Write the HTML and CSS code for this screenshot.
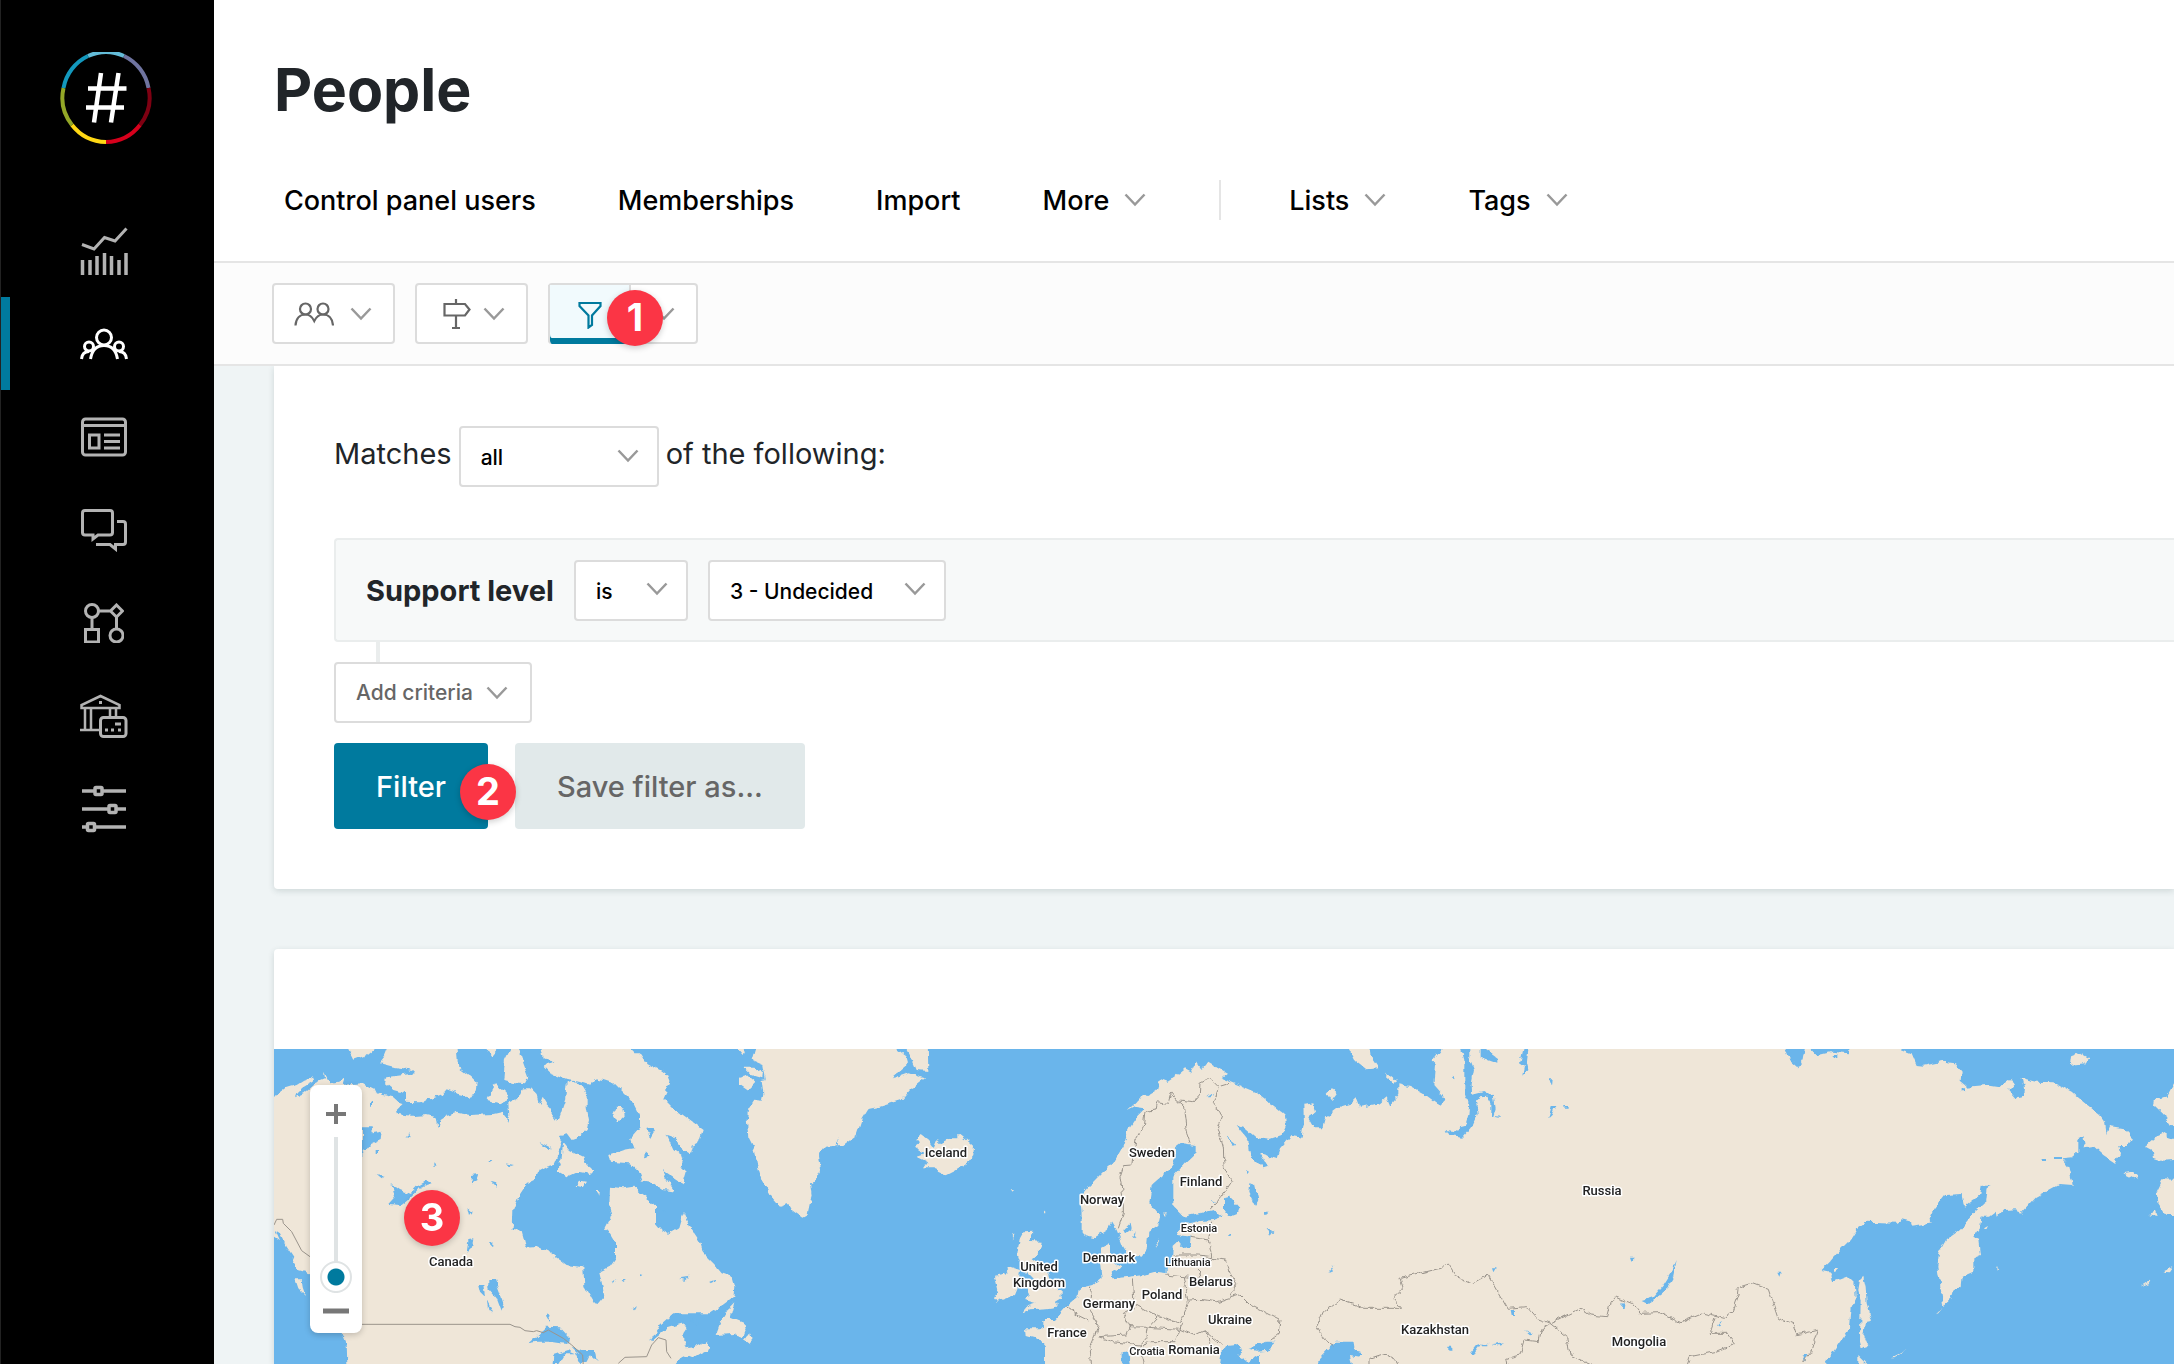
FILE: index.html
```html
<!DOCTYPE html>
<html lang="en">
<head>
<meta charset="utf-8">
<title>People</title>
<meta name="viewport" content="width=device-width, initial-scale=1">
<link rel="stylesheet" href="styles.css">
</head>
<body>
<svg width="0" height="0" class="sprite" aria-hidden="true">
  <symbol id="chevron" viewBox="0 0 22 14"><path d="M1.500 1.500 11 11.500 20.500 1.500" fill="none" stroke="#999" stroke-width="2.500"/></symbol>
</svg>
<div class="app">
  <aside class="sidebar">
    <a class="logo" href="#" aria-label="Home">
      <svg width="92" height="92" viewBox="0 0 92 92" fill="none" stroke-width="4">
        <path d="M28 4A44 44 0 0 1 64 4" stroke="#63bcd8"/>
        <path d="M64 4A44 44 0 0 1 88.500 36" stroke="#6f74a0"/>
        <path d="M88.500 36A44 44 0 0 1 80 73" stroke="#7e0012"/>
        <path d="M80 73A44 44 0 0 1 46 90" stroke="#d6001c"/>
        <path d="M46 90A44 44 0 0 1 12 73" stroke="#ffd814"/>
        <path d="M12 73A44 44 0 0 1 3.500 36" stroke="#93a727"/>
        <path d="M3.500 36A44 44 0 0 1 28 4" stroke="#1398bd"/>
        <path d="M41 21 34 70.500M58.500 21 51 70.500M28 36.500H66.500M26 55.500H64" stroke="#fff" stroke-width="4.500"/>
      </svg>
    </a>
    <nav class="side-nav" aria-label="Main">
      <a href="#" aria-label="Dashboard"><svg width="48" height="48" viewBox="0 0 48 48" fill="none" stroke="currentColor" stroke-width="3"><path d="M2 17.500 14 22 24.500 10.500 35 14 46.500 1.500"/><path d="M2.500 48V33M10 48V33M17 48V29M24.500 48V26M31.500 48V29M39 48V33M46 48V26" stroke-width="3.500"/></svg></a>
      <a href="#" class="active" aria-label="People"><svg width="48" height="32" viewBox="0 0 48 32" fill="none" stroke="currentColor" stroke-width="3"><circle cx="24" cy="9.500" r="7.500"/><circle cx="9" cy="18.500" r="4.500"/><circle cx="39" cy="18.500" r="4.500"/><path d="M10.500 31C12 22 17 17.500 24 17.500S36 22 37.500 31M1.500 31C2 26 5 23.500 9 23.500M46.500 31C46 26 43 23.500 39 23.500"/></svg></a>
      <a href="#" aria-label="Website"><svg width="46" height="40" viewBox="0 0 46 40" fill="none" stroke="currentColor" stroke-width="3"><rect x="1.500" y="2" width="43" height="36" rx="3"/><path d="M2 8.500H44M23 18H39M23 24.500H39M23 31H39"/><rect x="8.500" y="18" width="9.500" height="13"/></svg></a>
      <a href="#" aria-label="Communication"><svg width="46" height="44" viewBox="0 0 46 44" fill="none" stroke="currentColor" stroke-width="3"><path d="M4 2.500H29Q31.500 2.500 31.500 5V24.500Q31.500 27 29 27H17L12 31V27H4Q1.500 27 1.500 24.500V5Q1.500 2.500 4 2.500Z"/><path d="M36 13.500H42Q44.500 13.500 44.500 16V34Q44.500 36.500 42 36.500H34.500V41L29 36.500H15"/></svg></a>
      <a href="#" aria-label="Paths"><svg width="40" height="40" viewBox="0 0 40 40" fill="none" stroke="currentColor" stroke-width="3"><circle cx="8" cy="8" r="6.500"/><circle cx="32.500" cy="32.500" r="6.500"/><rect x="1.500" y="26.500" width="13" height="12.500"/><path d="M32.500 2 38.500 8 32.500 14 26.500 8ZM14.500 8H26.500M32.500 14V26M8 14.500V26.500" /></svg></a>
      <a href="#" aria-label="Finances"><svg width="48" height="44" viewBox="0 0 48 44" fill="none" stroke="currentColor" stroke-width="2.500"><path d="M1.500 14V11L20.500 2 39.500 11V14ZM5 14V36M11 14V36M30 14V23M36 14V23M0 36H20"/><rect x="20.500" y="23.500" width="25.500" height="19" rx="3" stroke-width="3"/><path d="M35 30H41M25 36H28M31 36H34M38 36H41M19 8.500H22" stroke-width="3"/></svg></a>
      <a href="#" aria-label="Settings"><svg width="44" height="48" viewBox="0 0 44 48" fill="none" stroke="currentColor" stroke-width="3.500"><path d="M0 6H12M21 6H44M0 24H26M35 24H44M0 42H5M14 42H44"/><rect x="13" y="2.500" width="7" height="7" rx="1"/><rect x="27" y="20.500" width="7" height="7" rx="1"/><rect x="5.500" y="38.500" width="7" height="7" rx="1"/></svg></a>
    </nav>
  </aside>

  <div class="page">
    <header class="header">
      <h1>People</h1>
      <nav class="tabs" aria-label="People sections">
        <a href="#">Control panel users</a>
        <a href="#">Memberships</a>
        <a href="#">Import</a>
        <button type="button">More <svg class="chev"><use href="#chevron"/></svg></button>
        <span class="divider"></span>
        <button type="button">Lists <svg class="chev"><use href="#chevron"/></svg></button>
        <button type="button">Tags <svg class="chev"><use href="#chevron"/></svg></button>
      </nav>
    </header>

    <div class="toolbar">
      <button type="button" class="tool" aria-label="People actions">
        <svg width="40" height="24" viewBox="0 0 40 24" fill="none" stroke="#666" stroke-width="2.200"><circle cx="11.500" cy="7" r="5.500"/><circle cx="29" cy="7" r="5.500"/><path d="M1.500 23.500C2 16.500 6 12.500 11.500 12.500Q17 12.500 20.250 19Q23.500 12.500 29 12.500C34.500 12.500 38.500 16.500 39 23.500"/></svg>
        <svg class="chev"><use href="#chevron"/></svg>
      </button>
      <button type="button" class="tool signpost" aria-label="Paths">
        <svg width="28" height="30" viewBox="0 0 28 30" fill="none" stroke="#666" stroke-width="2.200"><path d="M1.500 5H22L26.500 10.500 22 16.500H1.500ZM13 0V5M13 16.500V29M9 29H17"/></svg>
        <svg class="chev"><use href="#chevron"/></svg>
      </button>
      <div class="split">
        <button type="button" class="filter-on" aria-label="Filter people"><svg width="24" height="28" viewBox="0 0 24 28" fill="none" stroke="#007a9e" stroke-width="2.200"><path d="M1.500 2H22.500V5L14 14.500V24L10.500 26.500V14.500L1.500 5Z"/></svg></button>
        <button type="button" class="filter-more" aria-label="Saved filters"><svg class="chev"><use href="#chevron"/></svg></button>
        <span class="badge badge-one">1</span>
      </div>
    </div>

    <main class="content">
      <form class="card filter-card">
        <div class="match">
          <label for="match">Matches</label>
          <span class="select select-match"><select id="match"><option>all</option><option>any</option></select><svg class="chev"><use href="#chevron"/></svg></span>
          <span>of the following:</span>
        </div>
        <div class="criteria">
          <strong>Support level</strong>
          <span class="select select-op"><select aria-label="Operator"><option>is</option></select><svg class="chev"><use href="#chevron"/></svg></span>
          <span class="select select-value"><select aria-label="Support level"><option>3 - Undecided</option></select><svg class="chev"><use href="#chevron"/></svg></span>
        </div>
        <div class="connector"></div>
        <button type="button" class="add">Add criteria <svg class="chev"><use href="#chevron"/></svg></button>
        <div class="actions">
          <span class="marked"><button type="button" class="primary">Filter</button><span class="badge badge-two">2</span></span>
          <button type="button" class="secondary">Save filter as...</button>
        </div>
      </form>

      <section class="card map-card" aria-label="Map">
        <div class="map">
          <svg class="world" viewBox="0 0 1900 315" preserveAspectRatio="xMinYMin slice" role="img" aria-label="World map">
            <defs><filter id="coast" x="0" y="0" width="100%" height="100%" filterUnits="userSpaceOnUse"><feTurbulence type="fractalNoise" baseFrequency="0.140" numOctaves="2" seed="4"/><feDisplacementMap in="SourceGraphic" scale="6" xChannelSelector="R" yChannelSelector="G"/></filter></defs>
            <g filter="url(#coast)">
              <!-- North America -->
              <g transform="translate(-4 -9) scale(.33333)">
                <path class="land" d="M-20 185 12 175 25 160 45 145 60 140 80 135 100 122 130 112 125 125 100 140 80 160 75 172 100 160 140 125 165 115 162 95 180 130 205 125 222 110 215 135 275 130 300 145 340 165 370 172 385 185 400 190 378 212 385 222 430 228 470 225 500 232 505 265 512 240 530 228 560 218 600 225 670 222 700 215 712 245 718 225 715 190 745 175 760 145 780 145 800 165 808 195 818 170 830 190 845 205 845 225 860 245 870 225 885 180 890 130 910 125 935 140 950 165 950 200 957 240 950 270 920 295 905 300 890 280 870 285 875 300 865 340 850 375 830 380 795 400 795 420 770 432 745 470 730 510 728 570 755 572 768 620 800 618 835 635 870 660 890 675 940 682 943 735 975 790 985 792 1003 770 998 740 988 695 1020 680 1038 655 1038 610 1020 580 1005 570 1025 530 1018 500 1020 440 1060 445 1090 440 1110 460 1140 480 1158 500 1158 550 1175 570 1195 582 1225 565 1232 540 1242 515 1260 560 1290 605 1300 640 1330 670 1355 700 1385 710 1393 740 1390 770 1350 800 1320 820 1210 820 1170 855 1140 905 1190 865 1240 850 1250 865 1240 880 1240 905 1250 925 1280 920 1310 905 1322 925 1290 940 1265 955 1240 945 1200 1000H232V972L230 910 215 875 160 850 120 700 85 690 60 655 40 610 -20 570Z"/>
                <path class="land" d="M365 0H560V27L565 85 600 110 620 130 615 165 600 170 560 160 530 148 515 165 490 175 450 187 405 185 405 160 370 150 345 130 350 112 400 105 435 100 430 90 400 85 370 80 330 70 345 50ZM230 20H320L290 45 250 60ZM645 20H690L665 50ZM700 120 705 60 725 20H745L760 70 775 110 765 130 720 125ZM650 175 675 130 710 160 715 180 690 190 655 180ZM810 0H1075L1090 40 1110 40 1130 70 1150 80 1170 90 1190 105 1200 130 1180 175 1215 210 1250 235 1298 270 1285 310 1265 320 1260 340 1235 325 1205 290 1190 285 1210 330 1240 350 1235 380 1250 395 1240 430 1220 420 1175 390 1185 410 1215 455 1180 450 1150 430 1120 425 1110 400 1080 370 1020 365 1015 345 1060 330 1090 325 1080 295 1110 260 1110 230 1090 190 1060 160 1030 130 1000 120 980 115 960 135 930 125 890 120 840 100 820 80 850 65 820 50ZM880 305 900 330 940 350 950 375 972 390 960 402 925 395 890 412 860 395 875 350ZM1030 222 1040 200 1060 202 1064 230 1045 248ZM917 440 930 422 948 425 935 445ZM980 450 990 450 988 470ZM1337 885 1350 850 1380 800 1393 787 1382 830 1420 845 1430 865 1420 892 1390 882ZM1425 900 1440 880 1445 900 1438 910ZM75 715 95 715 98 745 105 765 85 745Z"/>
                <path class="water" d="M276 262H305L308 280 335 275 332 300 300 315 276 345ZM365 432 390 450 420 462 440 440 470 422 485 430 450 440 425 470 395 495 355 492 375 470ZM605 405 628 402 620 425 605 430ZM665 425 682 430 680 440ZM655 720 675 720 690 760 700 790 695 815 680 775 655 745ZM625 735 640 735 645 770 630 755ZM650 780 670 820 655 810ZM595 600 610 598 605 625 590 640ZM595 505 608 515 600 525ZM828 830 835 820 842 830 835 842ZM775 910 830 860 870 862 900 895 895 912 870 910 840 905 800 905ZM848 972 850 945 895 930 930 945 905 920 935 930 975 930 980 965 960 945 950 965 930 972 915 940 885 940 865 972ZM705 370 732 375 715 380ZM655 360 668 360 660 366ZM320 402 342 408 335 415ZM408 288 418 280 422 292ZM808 305 845 325 835 330ZM1128 260 1155 270 1140 295ZM1125 335 1142 350 1122 355ZM1228 715 1258 710 1245 720ZM1318 725 1340 718 1325 732ZM1085 805 1098 795 1090 808ZM1025 725 1042 718 1030 730ZM1055 720 1068 720 1060 726ZM1108 702 1120 706 1112 712ZM945 740 966 748 950 750ZM15 570 30 580 50 620 70 650 65 662 35 615ZM1180 512 1187 512 1184 520ZM1250 830 1290 845 1280 852ZM490 370 500 380 490 380ZM300 185H306V200H300ZM320 330H327V345H320ZM664 606H670V620H664Z"/>
              </g>
              <!-- Greenland, Iceland and the British Isles -->
              <g transform="translate(446 -9) scale(.33333)">
                <path class="land" d="M112 0H530V27L555 45 563 75 515 115 530 112 565 100 615 115 570 150 545 180 480 200 445 208 425 240 410 285 370 315 350 316 355 290 345 318 315 320 297 345 303 390 285 425 270 430 275 465 262 525 247 533 215 510 205 492 180 500 150 465 125 420 110 370 105 330 85 290 80 240 85 205 100 182 125 185 130 160 125 120 137 118 130 75 95 60ZM545 0H623L625 93 590 90 575 55ZM60 110 80 105 108 130 85 152 60 135ZM70 80 100 80 132 100 130 115 95 105ZM45 20H75L65 45ZM605 285 625 300 632 315 640 325 650 300 660 310 690 295 715 295 715 280 740 300 762 320 760 345 745 365 705 390 680 403 640 385 612 385 625 365 590 348 615 340 585 320 600 310 592 300ZM910 577 940 575 930 603 962 605 955 640 935 655 965 675 985 700 990 735 1022 750 1022 775 1005 785 1015 800 980 805 930 808 905 823 925 798 950 790 915 780 930 765 925 745 945 720 925 700 905 680 892 640 900 595ZM870 680 900 690 895 740 885 765 830 785 822 775 835 750 825 710 850 705ZM872 448 882 448 878 455ZM970 520 975 508 976 520ZM878 592 886 580 884 596Z"/>
              </g>
              <!-- Europe and Asia -->
              <g transform="translate(726 -9) scale(.33333)">
                <path class="land" d="M245 575 245 520 240 470 265 440 305 400 340 370 368 320 385 270 415 225 435 205 405 200 380 213 410 185 430 160 445 165 470 150 480 118 500 125 530 105 555 85 575 95 590 65 605 90 625 65 650 80 683 100 665 115 715 135 770 158 825 200 855 225 858 255 845 285 810 297 765 290 735 265 710 255 745 300 750 345 790 385 805 380 780 340 830 355 840 325 875 285 905 290 912 250 910 195 940 190 948 215 925 235 940 262 968 262 975 235 1020 200 1055 190 1070 175 1080 200 1140 190 1160 172 1170 195 1195 165 1195 130 1230 138 1270 160 1325 200 1335 175 1300 135 1305 75 1298 65 1325 27V0H2700V27L2735 40 2750 75 2770 77 2830 65 2865 70 2885 95 2882 125 2900 140 2955 135 3000 142 3030 120 3045 130 3028 150 3050 175 3072 170 3075 145 3068 115 3110 125 3160 127 3215 155 3250 185 3300 225 3315 245 3320 285 3330 258 3370 265 3400 295 3380 318 3355 318 3360 345 3345 368 3310 345 3280 318 3255 322 3250 290 3235 295 3235 335 3215 352 3185 355 3205 380 3218 435 3180 432 3110 470 3060 525 3050 508 3010 510 2993 530 2990 515 2970 530 2945 530 2940 560 2920 590 2938 600 2943 645 2920 655 2920 695 2885 710 2882 738 2862 750 2855 775 2830 798 2822 745 2812 680 2818 635 2838 600 2880 570 2920 520 2955 490 2960 445 2972 437 2945 437 2940 465 2895 500 2888 462 2835 465 2800 510 2785 545 2800 550 2740 560 2735 545 2705 538 2690 548 2600 545 2575 560 2550 600 2520 630 2490 665 2465 690 2490 695 2500 725 2540 710 2565 735 2567 775 2555 800 2550 865 2520 905 2475 972V1000H135V920L115 895 80 885 78 865 130 865 130 840 165 840 200 800 235 770 240 745 280 735 305 715 300 670 300 625 330 610 330 650 355 680 335 695 340 715 375 712 430 705 465 695 500 700 500 685 515 680 518 620 535 605 550 625 572 620 575 590 530 585 545 555 600 543 640 540 668 530 640 510 600 520 550 530 520 500 520 410 555 370 587 340 587 315 545 310 525 325 525 360 500 395 455 435 448 490 480 530 475 555 445 575 440 630 425 650 385 645 370 620 350 570 335 545 320 570 285 592 255 585Z"/>
                <path class="land" d="M1035 0H1105L1112 50 1135 85 1100 88 1065 60ZM1160 98 1188 120 1180 132 1158 112ZM982 160 995 145 1010 160 995 180ZM2590 710 2597 740 2600 790 2616 845 2595 850 2590 880 2605 918 2585 925 2580 905 2582 780 2575 750 2580 720ZM2575 945 2602 972V1000H2575ZM3560 130 3522 130 3500 170 3465 177 3462 198 3490 225 3510 255 3560 257ZM3560 298 3522 298 3500 290 3500 277 3465 292 3435 318 3458 330 3462 355 3485 362 3560 358ZM3560 418 3490 415 3470 455 3475 490 3500 528 3560 528ZM3207 75 3210 50 3240 38 3268 55 3255 70ZM3370 400 3395 395 3415 412 3400 415ZM3445 523 3465 515 3470 528ZM2952 565 2964 558 2958 570ZM2808 823 2828 803 2815 820ZM3420 740 3455 718 3450 728ZM3487 695 3520 682 3510 697ZM2670 955 2720 930 2680 955ZM2990 680 2998 690 2994 690ZM468 610 478 598 472 620ZM492 518 500 516 498 524Z"/>
                <path class="water" d="M672 475 690 470 718 500 710 520 690 527 672 505ZM748 430 765 435 775 480 765 495 745 455ZM740 390 750 395 745 402ZM680 290 705 310 700 318ZM800 565 820 578 812 590ZM792 515H803V524H792ZM685 582H695V588H685ZM982 702 1006 675 996 695ZM370 570 392 548 395 565 375 580ZM400 590 410 570 405 595ZM622 172 640 158 632 172ZM630 480 644 484 640 490ZM2030 660 2020 710 2000 745 1965 775 1945 788 1928 780 1960 770 1990 735 2015 695ZM1382 20H1408V55L1422 90 1415 130 1416 162 1450 153 1482 172 1487 205 1480 228 1500 230 1498 234 1474 228 1474 190 1462 170 1440 172 1428 185 1433 220 1415 260 1390 290 1345 285 1337 270 1375 275 1380 262 1395 258 1405 225 1408 190 1393 165 1393 60ZM1442 20 1458 30 1492 55 1492 68 1442 50ZM1572 20H1583L1578 60 1585 90 1570 107 1575 80 1560 70ZM1648 115 1658 115 1656 138ZM1645 235 1655 198 1666 198 1655 225ZM1690 198H1703V203H1690ZM2355 20H2415L2408 60 2395 82 2370 60ZM2425 20H2545V40L2495 35 2450 46ZM2500 42H2512V55ZM1355 112 1366 108 1366 118ZM955 960 1005 905 1060 905 1065 935 1088 940 1080 950 1050 945 1055 972V1000H955ZM655 1000 665 940 680 915 705 912 730 930 715 945 745 965 780 945V1000ZM740 925 800 905 827 905 800 930 770 932ZM365 1000V940L385 935 392 1000ZM1410 940 1430 915 1445 910 1420 945ZM1445 911H1465V916H1445ZM1475 916 1508 910 1500 920ZM1572 870 1602 884 1590 886ZM1532 810 1545 810 1545 825 1535 825ZM1866 810 1868 788 1877 785 1874 810ZM1345 920H1357V932H1345ZM2150 860 2165 845 2162 858ZM1890 650 1908 650 1894 662ZM1476 685H1487L1480 697ZM2332 698 2342 698 2338 710ZM2408 945 2422 945 2415 962ZM3125 360H3138V366H3125ZM3165 348H3183V357H3165ZM2885 145H2893V154H2885Z"/>
                <path class="land" d="M345 672 362 680 352 693 338 688ZM2502 684H2510V692H2502ZM3492 498H3510V505H3492Z"/>
              </g>
              <g class="borders" transform="translate(726 -9) scale(.33333)"><path d="M355 565 370 520 370 480 360 410 370 380 395 378 405 300 430 260 435 215 465 210 470 185 505 190 515 155 535 180 580 185 598 165 600 130 630 115 655 140 690 130M515 165 550 195 560 280 570 308M655 145 640 190 668 230 655 265 670 320 672 380 695 425 665 470 630 508M635 545 625 600 575 592M625 600 635 650 595 645 520 645M635 655 680 660 690 700 710 730 692 770M595 690 600 715 550 710M400 715 405 790 475 830 540 850 565 790 550 710 495 705M565 780 600 778 650 785 720 765 750 795 840 840 835 880 810 900M275 740 265 810 295 855 285 885 270 920 275 980M370 820 410 800M370 820 390 860 445 862 475 830M295 890 380 885 390 860M445 862 440 890 420 915 340 905 295 890M445 862 540 868 545 850M540 868 580 885 610 870 665 915M540 868 525 905 440 905 420 930 430 970M610 870 640 920M200 798 235 825 265 840M1000 920 970 895 950 860 970 815 1020 780 1095 805 1205 805 1180 775 1210 745 1200 715 1320 685 1345 672 1370 710 1420 730 1465 705 1522 805 1580 800 1610 835 1650 850 1740 805 1770 825 1820 830 1830 790 1845 770 1895 790 1920 820 1980 818 2040 848 2110 820 2170 835 2200 810 2218 760 2205 745 2260 728 2305 745 2335 835 2380 855 2390 885 2455 870 2435 935 2410 965M1650 850 1700 890 1710 945 1785 980M1650 850 1620 870 1615 905 1572 900 1560 945 1520 955 1525 980M2145 835 2130 880 2180 880 2203 912 2145 935 2070 950 2060 980M1110 980V955L1155 940 1198 965V980"/></g>
            </g>
            <g class="borders" transform="translate(-4 -9) scale(.33333)"><path d="M276 853H720L735 860 750 862 765 872 790 875 800 872 820 878 835 870 880 895 905 915 938 945 940 980M1045 970 1065 952 1130 950 1145 915 1165 893 1188 900 1190 935 1203 955M12 555 20 538 38 538 40 550 65 575 95 632 120 650"/></g>
            <g class="labels">
              <text x="177" y="217">Canada</text><text x="672" y="108">Iceland</text><text x="878" y="108">Sweden</text><text x="927" y="137">Finland</text><text x="828" y="155">Norway</text><text class="small" x="925" y="183">Estonia</text><text x="835" y="213">Denmark</text><text class="small" x="914" y="217">Lithuania</text><text x="765" y="222">United</text><text x="765" y="238">Kingdom</text><text x="937" y="237">Belarus</text><text x="888" y="250">Poland</text><text x="835" y="259">Germany</text><text x="956" y="275">Ukraine</text><text x="793" y="288">France</text><text class="small" x="873" y="306">Croatia</text><text x="920" y="305">Romania</text><text x="1161" y="285">Kazakhstan</text><text x="1365" y="297">Mongolia</text><text x="1328" y="146">Russia</text>
            </g>
          </svg>
          <div class="zoom">
            <button type="button" aria-label="Zoom in"><svg width="20" height="20"><path d="M10 0V20M0 10H20" stroke="#777" stroke-width="4"/></svg></button>
            <input type="range" aria-label="Zoom level" min="0" max="10" value="0">
            <button type="button" aria-label="Zoom out"><svg width="26" height="20"><path d="M0 10H26" stroke="#777" stroke-width="5"/></svg></button>
          </div>
          <span class="badge badge-three">3</span>
        </div>
      </section>
    </main>
  </div>
</div>
</body>
</html>
```
FILE: styles.css
```css
* { box-sizing: border-box; }
body {
  margin: 0;
  font-family: Inter, "Liberation Sans", sans-serif;
  font-size: 29px;
  color: #212529;
  background: #eff4f5;
}
h1 { margin: 0; }
button, select {
  font: inherit;
  color: inherit;
  margin: 0;
  padding: 0;
  border: 0;
  background: none;
  cursor: pointer;
}
a { color: inherit; text-decoration: none; }
.sprite { position: absolute; }
.chev { width: 22px; height: 14px; flex: none; }

.app { display: flex; min-height: 100vh; }

/* Sidebar */
.sidebar {
  flex: 0 0 214px;
  background: #000;
  border-left: 1px solid #222;
  color: #b3b3b3;
}
.logo {
  display: flex;
  justify-content: center;
  padding: 52px 4px 60px 0;
}
.side-nav { display: flex; flex-direction: column; }
.side-nav a {
  display: flex;
  align-items: center;
  justify-content: center;
  height: 93px;
  padding-right: 8px;
}
.side-nav .active {
  color: #fff;
  box-shadow: inset 9px 0 #007a9e;
}

/* Header */
.page {
  flex: 1;
  min-width: 0;
  display: flex;
  flex-direction: column;
}
.header {
  padding: 55px 60px 36px;
  background: #fff;
  border-bottom: 2px solid #e5e5e5;
}
.header h1 {
  font-size: 59px;
  line-height: 70px;
  font-weight: 700;
}
.tabs {
  display: flex;
  align-items: center;
  margin-top: 50px;
  padding-left: 10px;
  gap: 82px;
  height: 50px;
  font-size: 27px;
  font-weight: 500;
  color: #000;
  white-space: nowrap;
}
.tabs button { display: flex; align-items: center; gap: 15px; }
.divider {
  width: 2px;
  height: 40px;
  margin: 0 -14px 0 -9px;
  background: #e5e5e5;
}

/* Toolbar */
.toolbar {
  display: flex;
  gap: 20px;
  padding: 20px 58px;
  background: #fcfcfc;
  border-bottom: 2px solid #e5e5e5;
}
.tool, .split {
  display: flex;
  align-items: center;
  height: 61px;
  background: #fff;
  border: 2px solid #dcdcdc;
  border-radius: 4px;
}
.tool { gap: 16px; padding: 0 21px 0 20px; }
.signpost { gap: 12px; padding: 0 21px 0 26px; }
.split { position: relative; }
.split button {
  display: flex;
  align-items: center;
  justify-content: center;
  align-self: stretch;
}
.split .filter-on {
  width: 83px;
  margin: 0 0 -2px -2px;
  border: solid #dcdcdc;
  border-width: 0 2px;
  background: #f1fafd;
  box-shadow: inset 0 -6px #007a9e;
  border-radius: 0 0 0 4px;
}
.filter-more { width: 65px; }

.badge {
  position: absolute;
  width: 56px;
  height: 56px;
  border-radius: 50%;
  background: #fb3545;
  color: #fff;
  font-size: 38px;
  line-height: 54px;
  font-weight: 700;
  text-align: center;
  box-shadow: 0 2px 6px rgba(0, 0, 0, .2);
}
.badge-one { left: 57px; top: 5px; }
.badge-two { right: -28px; top: 21px; }
.badge-three { left: 130px; top: 141px; }

/* Cards */
.content {
  flex: 1;
  display: flex;
  flex-direction: column;
  gap: 60px;
  padding-left: 60px;
}
.card {
  background: #fff;
  box-shadow: 0 2px 6px rgba(40, 70, 70, .16);
}
.filter-card {
  padding: 60px 0 60px 60px;
  border-radius: 0 0 0 4px;
  clip-path: inset(0 0 -10px -10px);
}
.match {
  display: flex;
  gap: 7px;
  height: 61px;
  line-height: 56px;
}
.select { display: inline-grid; font-weight: 500; color: #000; }
.select > * { grid-area: 1 / 1; }
.select .chev { place-self: center end; margin: 0 20px 2px 0; pointer-events: none; }
.select select {
  width: 100%;
  height: 61px;
  padding: 2px 40px 0 20px;
  appearance: none;
  border: 2px solid #dcdcdc;
  border-radius: 4px;
  background: #fff;
  font-size: 21px;
}
.select-match { width: 200px; }
.select-op { width: 114px; }
.select-value { width: 238px; }
.criteria {
  display: flex;
  align-items: center;
  gap: 20px;
  height: 104px;
  margin-top: 51px;
  padding: 0 30px;
  border: 2px solid #eaeded;
  border-right: 0;
  border-radius: 4px 0 0 4px;
  background: #f7f9f9;
}
.criteria strong { font-weight: 700; }
.connector {
  width: 4px;
  height: 20px;
  margin-left: 42px;
  background: #eaeded;
}
.add {
  display: flex;
  align-items: center;
  gap: 13px;
  height: 61px;
  padding: 0 22px 0 20px;
  border: 2px solid #dcdcdc;
  border-radius: 4px;
  font-size: 21px;
  font-weight: 500;
  color: #666;
}
.actions { display: flex; gap: 27px; margin-top: 20px; }
.marked { position: relative; }
.primary, .secondary {
  height: 86px;
  padding: 0 42px;
  border-radius: 4px;
  font-weight: 500;
}
.primary { background: #007a9e; color: #fff; }
.secondary { background: #e1e9ea; color: #666; }

/* Map */
.map-card {
  flex: 1;
  display: flex;
  padding-top: 100px;
  border-radius: 4px 0 0 0;
}
.map {
  position: relative;
  flex: 1;
  min-height: 315px;
  overflow: hidden;
  background: #6ab5eb;
}
.world { display: block; width: 100%; height: 315px; }
.land { fill: #efe6d8; }
.water { fill: #6ab5eb; }
.borders path { fill: none; stroke: #9a948c; stroke-width: 3; }
.labels text {
  font-family: Roboto, sans-serif;
  font-size: 13px;
  font-weight: 500;
  text-anchor: middle;
  fill: #222;
  stroke: #fff;
  stroke-width: 3px;
  stroke-linejoin: round;
  paint-order: stroke;
}
.labels .small { font-size: 11px; }
.zoom {
  position: absolute;
  left: 36px;
  top: 36px;
  display: flex;
  flex-direction: column;
  align-items: center;
  width: 52px;
  height: 248px;
  padding: 19px 0 12px;
  border-radius: 8px;
  background: #fff;
  box-shadow: 0 2px 6px rgba(0, 0, 0, .2);
}
.zoom button { height: 20px; display: flex; }
.zoom input {
  flex: 1;
  min-height: 0;
  width: 32px;
  margin: 13px 0 8px;
  appearance: none;
  writing-mode: vertical-lr;
  direction: rtl;
  background: linear-gradient(#dfe3e4, #dfe3e4) center / 4px 100% no-repeat;
}
.zoom input::-webkit-slider-thumb {
  appearance: none;
  width: 32px;
  height: 32px;
  border: 2px solid #dfe3e4;
  border-radius: 50%;
  background: radial-gradient(circle, #007a9e 8px, #fff 9px);
}
```
